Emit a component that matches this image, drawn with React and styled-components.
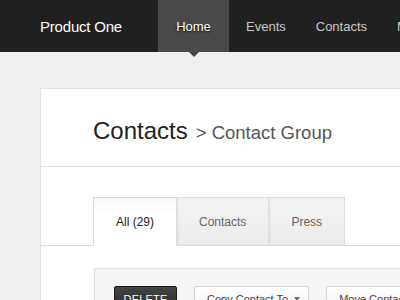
import React from "react";
import styled, { createGlobalStyle } from "styled-components";

const navItems = ["Home", "Events", "Contacts", "Media"];
const tabs = [
  { label: "All (29)", active: true },
  { label: "Contacts" },
  { label: "Press" },
];

export default function App() {
  return (
    <Page>
      <GlobalStyle />
      <TopBar>
        <Brand>Product One</Brand>
        <NavList>
          {navItems.map((item, index) => (
            <NavItem key={item} $active={index === 0}>
              {item}
            </NavItem>
          ))}
        </NavList>
      </TopBar>
      <Card>
        <CardHeader>
          <Title>Contacts</Title>
          <Crumb>&gt; Contact Group</Crumb>
        </CardHeader>
        <TabBar>
          {tabs.map((tab) => (
            <Tab key={tab.label} $active={tab.active}>
              {tab.label}
            </Tab>
          ))}
        </TabBar>
        <Toolbar>
          <DarkButton>DELETE</DarkButton>
          <LightButton>
            Copy Contact To <Caret />
          </LightButton>
          <LightButton>Move Contact To</LightButton>
        </Toolbar>
      </Card>
    </Page>
  );
}

const GlobalStyle = createGlobalStyle`
  html, body {
    margin: 0;
    padding: 0;
    background: #f0f0f0;
    overflow: hidden;
  }
  * {
    box-sizing: border-box;
  }
`;

const Page = styled.div`
  width: 400px;
  height: 300px;
  overflow: hidden;
  font-family: "Liberation Sans", Arial, sans-serif;
`;

const TopBar = styled.div`
  display: flex;
  height: 52px;
  background: #212121;
  white-space: nowrap;
`;

const Brand = styled.div`
  display: flex;
  align-items: center;
  flex: 0 0 158px;
  padding-left: 40px;
  color: #fff;
  font-size: 15px;
  letter-spacing: -0.2px;
`;

const NavList = styled.div`
  display: flex;
`;

const NavItem = styled.div`
  position: relative;
  display: flex;
  align-items: center;
  justify-content: center;
  width: ${(p) => (p.$active ? "71px" : "auto")};
  padding: ${(p) => (p.$active ? "0" : "0 13px")};
  margin-left: ${(p) => (p.$active ? "0" : "4px")};
  background: ${(p) => (p.$active ? "#4a4a4a" : "transparent")};
  color: ${(p) => (p.$active ? "#fff" : "#c8c8c8")};
  font-size: 13px;
  text-shadow: ${(p) => (p.$active ? "0 1px 2px #000" : "none")};

  &::after {
    content: "";
    display: ${(p) => (p.$active ? "block" : "none")};
    position: absolute;
    left: 50%;
    bottom: -5px;
    margin-left: -5px;
    border-left: 5px solid transparent;
    border-right: 5px solid transparent;
    border-top: 5px solid #444;
  }
`;

const Card = styled.div`
  width: 400px;
  margin: 36px 0 0 40px;
  background: #fff;
  border: 1px solid #e2e2e2;
  border-right: none;
`;

const CardHeader = styled.div`
  display: flex;
  align-items: baseline;
  height: 78px;
  padding: 30px 0 0 52px;
  border-bottom: 1px solid #e2e2e2;
`;

const Title = styled.h1`
  margin: 0;
  font-size: 24px;
  line-height: 1;
  font-weight: normal;
  color: #222;
`;

const Crumb = styled.span`
  margin-left: 8px;
  font-size: 18.5px;
  color: #555;
`;

const TabBar = styled.div`
  display: flex;
  padding: 30px 0 0 52px;
  border-bottom: 1px solid #dcdcdc;
`;

const Tab = styled.div`
  display: flex;
  align-items: center;
  justify-content: center;
  height: 49px;
  margin-bottom: -1px;
  padding: 0 22px;
  font-size: 12px;
  color: ${(p) => (p.$active ? "#222" : "#666")};
  background: ${(p) =>
    p.$active
      ? "linear-gradient(#f8f8f8, #fff 40%)"
      : "linear-gradient(#f4f4f4, #ececec)"};
  border: 1px solid #dcdcdc;
  border-bottom: ${(p) => (p.$active ? "1px solid #fff" : "1px solid #dcdcdc")};
  box-shadow: ${(p) => (p.$active ? "none" : "inset 2px 0 2px rgba(0,0,0,0.04)")};

  & + & {
    border-left: none;
  }
`;

const Toolbar = styled.div`
  display: flex;
  gap: 17px;
  margin: 22px 0 0 53px;
  padding: 17px 0 0 19px;
  height: 80px;
  background: #f5f5f5;
  border: 1px solid #e0e0e0;
  border-right: none;
`;

const DarkButton = styled.div`
  display: flex;
  align-items: center;
  justify-content: center;
  width: 63px;
  height: 26px;
  background: linear-gradient(#444, #2a2a2a);
  border: 1px solid #1a1a1a;
  border-radius: 2px;
  color: #fff;
  font-size: 11px;
  letter-spacing: 0.2px;
`;

const LightButton = styled.div`
  display: flex;
  align-items: center;
  gap: 4px;
  height: 26px;
  padding: 0 8px 0 12px;
  background: linear-gradient(#fff, #f2f2f2);
  border: 1px solid #d4d4d4;
  border-radius: 2px;
  color: #444;
  font-size: 11px;
  white-space: nowrap;
`;

const Caret = styled.span`
  display: inline-block;
  margin-left: 2px;
  border-left: 3px solid transparent;
  border-right: 3px solid transparent;
  border-top: 4px solid #666;
`;
